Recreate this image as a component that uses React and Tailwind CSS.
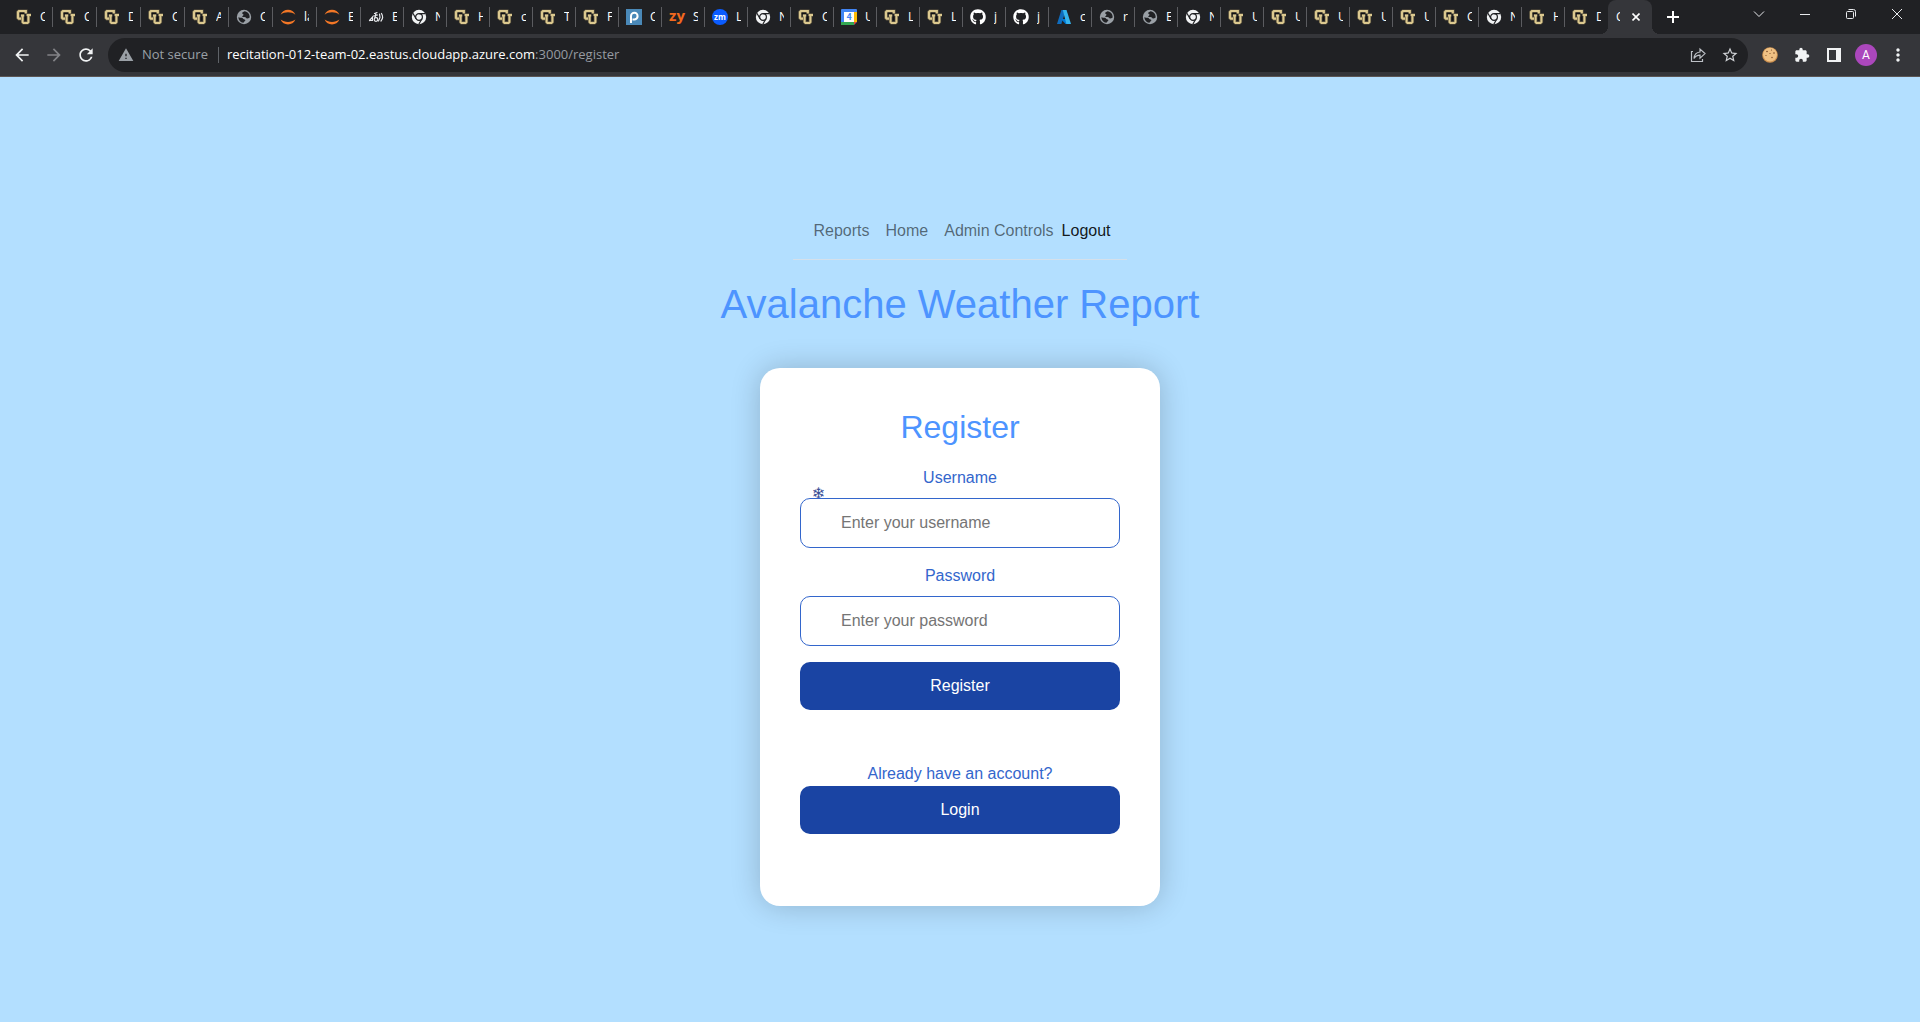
import React from "react";
import {
  MdArrowBack,
  MdArrowForward,
  MdRefresh,
  MdWarning,
  MdStarBorder,
  MdExtension,
  MdMoreVert,
} from "react-icons/md";
import { FaGithub } from "react-icons/fa";

function CuIcon() {
  const c = "M9.800 4.600V2.200H2.900L2 3.100V8.700L2.900 9.600H5";
  const u = "M6.600 6.600V13L7.500 13.900H11.500L12.400 13V6M4.900 6.400H8.200M10.600 6H15";
  return (
    <svg viewBox="0 0 16 16" className="size-4" fill="none">
      <path d={c} stroke="#5d5540" strokeWidth="3.600" />
      <path d={u} stroke="#5d5540" strokeWidth="3.400" />
      <path d={c} stroke="#dcc98f" strokeWidth="2.200" />
      <path d="M3.800 4.400H8.200M9.500 7.500V11.500" stroke="#111114" strokeWidth="1.600" />
      <path d={u} stroke="#dcc98f" strokeWidth="2" />
    </svg>
  );
}

function GlobeIcon() {
  return (
    <svg viewBox="0 0 16 16" className="size-4">
      <circle cx="8" cy="8" r="7.200" fill="#9aa0a6" />
      <path
        d="M8.500 2.200c-.8.600-2.300.700-2.300 1.900s1.300.7 1.300 1.600-1.200.9-1.200 1.700.9.700 2.200.7 1.500 1 2.300 1.300 1.700-.3 2.900-1C13.700 5 11.800 2.600 8.500 2.200Z"
        fill="#202124"
      />
      <path
        d="M2.300 8.200c1.300.6 2.300.3 3.500.6s1.200 1.300 2.100 1.500 1.500.4 1.400 1.200-1.200.9-1.400 1.600-.4.600-.8.600C4.500 13.300 2.500 11.300 2.300 8.200Z"
        fill="#202124"
      />
    </svg>
  );
}

function JupyterIcon() {
  return (
    <svg viewBox="0 0 16 16" className="size-4" fill="#f37726">
      <path d="M.6 5.700C2 2.300 4.700.8 8 .8s6 1.500 7.400 4.900C13.200 4 10.700 3.300 8 3.300S2.800 4 .6 5.700Z" />
      <path d="M.6 10.600C2 14 4.700 15.400 8 15.400s6-1.400 7.400-4.800C13.200 12.300 10.700 13 8 13s-5.200-.7-7.400-2.400Z" />
    </svg>
  );
}

function ScribbleIcon() {
  return (
    <svg viewBox="0 0 16 16" className="size-4" fill="none" stroke="#e8eaed" strokeWidth="1.200" strokeLinecap="round">
      <path d="M1.500 11.500L4.500 8V11.500H2.500" />
      <path d="M6.500 4.500L9 3.500M5.500 7L9.500 6M8 4.500L7 8.500" />
      <circle cx="8" cy="10.500" r="1.800" />
      <path d="M11.500 5L12 8.500L10.500 12M13.500 4.500C15.300 7.500 14.800 10 13 12" />
    </svg>
  );
}

function ChromeIcon() {
  return (
    <svg viewBox="0 0 16 16" className="size-4">
      <circle cx="8" cy="8" r="7.200" fill="#f1f3f4" />
      <g stroke="#202124" strokeWidth="1.200" fill="none">
        <path d="M8 4.600H14.200M5.050 9.700 1.900 4.300M10.950 9.700 7.800 15.200" />
        <circle cx="8" cy="8" r="3.400" />
      </g>
      <circle cx="8" cy="8" r="2" fill="#f1f3f4" />
    </svg>
  );
}

function PIcon() {
  return (
    <svg viewBox="0 0 16 16" className="size-4" fill="none" stroke="#fff" strokeWidth="2">
      <rect width="16" height="16" fill="#4a89b8" stroke="none" />
      <path d="M5 14V7a3.300 3.300 0 1 1 3.300 3.400H6.500" />
    </svg>
  );
}

function ZyIcon() {
  return (
    <span className="flex size-4 items-center justify-center pb-1 font-['Open_Sans',sans-serif] text-[15px] leading-none font-bold text-[#f2691e]">
      zy
    </span>
  );
}

function ZmIcon() {
  return (
    <span className="flex size-4 items-center justify-center rounded-full bg-[#0b5cff] pb-px font-['Open_Sans',sans-serif] text-[8px] leading-none font-bold text-white">
      zm
    </span>
  );
}

function CalendarIcon() {
  return (
    <svg viewBox="0 0 16 16" className="size-4">
      <rect width="16" height="16" rx="1" fill="#4285f4" />
      <rect x="13" y="3" width="3" height="10" fill="#fbbc04" />
      <rect y="13" width="13" height="3" fill="#34a853" />
      <path d="M13 13h3l-3 3Z" fill="#ea4335" />
      <path d="M16 13v3h-3Z" fill="#202124" />
      <rect x="3" y="3" width="10" height="10" fill="#fff" />
      <text x="8" y="11" textAnchor="middle" fontFamily="Roboto, sans-serif" fontSize="9" fontWeight="700" fill="#4285f4">
        4
      </text>
    </svg>
  );
}

function AzureIcon() {
  return (
    <svg viewBox="0 0 16 16" className="size-4">
      <path d="M5.400 1h4.500L5.300 15H1Z" fill="#0f6cbd" />
      <path d="M5 10h6.800l1 5H9.500Z" fill="#0078d4" />
      <path d="M6.800 1h3.700L15 15h-4.600Z" fill="#35b4ee" />
    </svg>
  );
}

function GithubIcon() {
  return <FaGithub className="size-4 text-white" />;
}

function CookieIcon() {
  return (
    <svg viewBox="0 0 16 16" className="size-4">
      <circle cx="8" cy="8" r="7.800" fill="#cf9250" />
      <circle cx="8" cy="7.600" r="6.900" fill="#efc184" />
      <g fill="#7a4a26">
        <circle cx="5" cy="4.500" r=".8" />
        <circle cx="9.500" cy="3" r=".6" />
        <circle cx="12" cy="6" r=".8" />
        <circle cx="8" cy="6.500" r=".6" />
        <circle cx="4" cy="8.500" r=".6" />
        <circle cx="10" cy="10.500" r=".7" />
      </g>
    </svg>
  );
}

const icons = {
  cu: CuIcon,
  globe: GlobeIcon,
  jupyter: JupyterIcon,
  scribble: ScribbleIcon,
  chrome: ChromeIcon,
  p: PIcon,
  zy: ZyIcon,
  zm: ZmIcon,
  calendar: CalendarIcon,
  github: GithubIcon,
  azure: AzureIcon,
};

const tabs = [
  ["cu", "C"], ["cu", "C"], ["cu", "D"], ["cu", "C"], ["cu", "A"], ["globe", "C"],
  ["jupyter", "la"], ["jupyter", "E"], ["scribble", "E"], ["chrome", "N"], ["cu", "H"],
  ["cu", "c"], ["cu", "T"], ["cu", "F"], ["p", "C"], ["zy", "S"], ["zm", "L"],
  ["chrome", "N"], ["cu", "C"], ["calendar", "U"], ["cu", "L"], ["cu", "L"],
  ["github", "j"], ["github", "j"], ["azure", "c"], ["globe", "r"], ["globe", "E"],
  ["chrome", "N"], ["cu", "U"], ["cu", "U"], ["cu", "U"], ["cu", "U"], ["cu", "U"],
  ["cu", "C"], ["chrome", "N"], ["cu", "H"], ["cu", "D"],
];

function Tab({ icon, title, wide, last }) {
  const Icon = icons[icon];
  return (
    <button
      type="button"
      className={`flex h-5 shrink-0 items-center gap-2 border-r pl-[7px] ${wide ? "w-11" : "w-[43px]"} ${
        last ? "border-transparent" : "border-[#5b5c60]"
      }`}
    >
      <Icon />
      <span className="w-[5px] overflow-hidden text-left">{title}</span>
    </button>
  );
}

function ActiveTab() {
  return (
    <div className="relative flex h-[34px] w-11 shrink-0 items-center justify-between rounded-t-lg bg-[#35363a] pr-3 pl-2">
      <span className="absolute bottom-0 -left-2 size-2 bg-[radial-gradient(circle_at_0_0,transparent_8px,#35363a_8px)]" />
      <span className="absolute -right-2 bottom-0 size-2 bg-[radial-gradient(circle_at_100%_0,transparent_8px,#35363a_8px)]" />
      <span className="w-1 overflow-hidden">C</span>
      <button type="button" aria-label="Close tab">
        <svg viewBox="0 0 8 8" className="size-2" stroke="#fff" strokeWidth="1.600">
          <path d="M.5.5l7 7M7.500.5l-7 7" />
        </svg>
      </button>
    </div>
  );
}

function WindowButton({ label, children }) {
  return (
    <button type="button" aria-label={label} className="flex h-7 w-[46px] items-center justify-center">
      <svg viewBox="0 0 12 12" className="size-3" fill="none" stroke="#e8eaed" strokeWidth="1">
        {children}
      </svg>
    </button>
  );
}

function TabStrip() {
  return (
    <div className="flex h-[34px] bg-[#202124] pl-[9px] text-xs text-white">
      <div className="flex h-[34px] items-center">
        {tabs.map(([icon, title], i) => (
          <Tab key={i} icon={icon} title={title} wide={i < 8} last={i === tabs.length - 1} />
        ))}
        <ActiveTab />
      </div>
      <button type="button" aria-label="New tab" className="ml-[7px] flex w-7 items-center justify-center">
        <svg viewBox="0 0 12 12" className="size-3" stroke="#fff" strokeWidth="2">
          <path d="M6 0v12M0 6h12" />
        </svg>
      </button>
      <div className="ml-auto flex">
        <WindowButton label="Search tabs"><path d="M1 3.500l5 5 5-5" /></WindowButton>
        <WindowButton label="Minimize"><path d="M1 6.500h10" /></WindowButton>
        <WindowButton label="Restore">
          <rect x="1.500" y="3.500" width="7" height="7" rx="1" />
          <path d="M3.500 1.500h5a2 2 0 0 1 2 2v5" />
        </WindowButton>
        <WindowButton label="Close"><path d="M1 1l10 10M11 1L1 11" /></WindowButton>
      </div>
    </div>
  );
}

function ToolButton({ label, children }) {
  return (
    <button type="button" aria-label={label} className="flex size-8 items-center justify-center">
      {children}
    </button>
  );
}

function Toolbar() {
  return (
    <div className="flex h-[43px] items-center border-b border-[#5c5654] bg-[#35363a] pr-1.5 pl-1.5 text-[#f1f3f4]">
      <ToolButton label="Back"><MdArrowBack className="size-5" /></ToolButton>
      <ToolButton label="Forward"><MdArrowForward className="size-5 text-[#828387]" /></ToolButton>
      <ToolButton label="Reload"><MdRefresh className="size-5" /></ToolButton>
      <div className="ml-1.5 flex h-[34px] flex-1 items-center rounded-full bg-[#202124] pr-0.5 pl-2.5 text-[13px]">
        <MdWarning className="size-4 text-[#9aa0a6]" />
        <span className="ml-2 text-[#9aa0a6]">Not secure</span>
        <span className="mr-2 ml-2.5 h-4 w-px bg-[#5f6368]" />
        <span className="flex-1 text-[#969ba1]">
          <span className="text-white">recitation-012-team-02.eastus.cloudapp.azure.com</span>:3000/register
        </span>
        <ToolButton label="Share">
          <svg viewBox="0 0 16 16" className="size-4" fill="none" stroke="#bdc1c6" strokeWidth="1.200">
            <path d="M3 4.500H1.500v10h11V12" />
            <path d="M4 11.500C4.300 7.500 6.500 5.300 10 5V2l5 4.600-5 4.600V8.200C7.500 8.200 5.500 9 4 11.500Z" />
          </svg>
        </ToolButton>
        <ToolButton label="Bookmark"><MdStarBorder className="size-[18px] text-[#cfd2d6]" /></ToolButton>
      </div>
      <div className="ml-1.5 flex">
        <ToolButton label="Cookies"><CookieIcon /></ToolButton>
        <ToolButton label="Extensions"><MdExtension className="size-4" /></ToolButton>
        <ToolButton label="Side panel">
          <svg viewBox="0 0 14 14" className="size-3.5">
            <path fill="#f1f3f4" fillRule="evenodd" d="M0 0h14v14H0ZM2 2v10h7V2Z" />
          </svg>
        </ToolButton>
        <ToolButton label="Profile">
          <span className="flex size-[22px] items-center justify-center rounded-full bg-[#ab47bc] font-[Roboto,sans-serif] text-xs text-white">
            A
          </span>
        </ToolButton>
        <ToolButton label="Menu"><MdMoreVert className="size-5" /></ToolButton>
      </div>
    </div>
  );
}

function Field({ id, label, type, placeholder, snowflake }) {
  return (
    <div className="relative mb-4 flex flex-col gap-2">
      <label htmlFor={id}>{label}</label>
      {snowflake && (
        <span className="absolute top-4 left-3 font-['DejaVu_Sans',sans-serif] text-[#3a4f96]">❄</span>
      )}
      <input
        id={id}
        type={type}
        placeholder={placeholder}
        className="relative h-[50px] w-full rounded-[10px] border border-[#3366cc] bg-white pr-5 pl-10 text-base text-black placeholder:text-[#757575]"
      />
    </div>
  );
}

function PrimaryButton({ children }) {
  return (
    <button type="button" className="h-12 w-full rounded-[10px] bg-[#1a44a3] text-white">
      {children}
    </button>
  );
}

export default function App() {
  return (
    <div className="flex min-h-screen flex-col bg-[#b3dfff]">
      <header className="font-['Open_Sans','Noto_Sans',sans-serif]">
        <TabStrip />
        <Toolbar />
      </header>
      <main className="flex flex-1 flex-col items-center pt-[142px] pb-12 font-['Liberation_Sans',Arial,sans-serif] text-base">
        <nav className="flex border-b border-[#d5e0ea] pr-4 pb-4 pl-5 text-black/55">
          <a href="#reports">Reports</a>
          <a href="#home" className="ml-4">Home</a>
          <a href="#admin" className="ml-4">Admin Controls</a>
          <a href="#logout" className="ml-2 text-black/90">Logout</a>
        </nav>
        <h1 className="mt-5 text-[40px] leading-12 text-[#4d94ff]">Avalanche Weather Report</h1>
        <section className="mt-10 w-full max-w-[400px] rounded-[20px] bg-white px-10 pt-10 pb-[72px] text-center text-[#3366cc] shadow-[0_0_30px_rgba(0,0,0,0.2)]">
          <h2 className="mb-5 text-[32px] leading-[38px] text-[#4d94ff]">Register</h2>
          <form>
            <Field id="username" label="Username" type="text" placeholder="Enter your username" snowflake />
            <Field id="password" label="Password" type="password" placeholder="Enter your password" />
            <PrimaryButton>Register</PrimaryButton>
          </form>
          <p className="mt-[52px]">Already have an account?</p>
          <PrimaryButton>Login</PrimaryButton>
        </section>
      </main>
    </div>
  );
}
